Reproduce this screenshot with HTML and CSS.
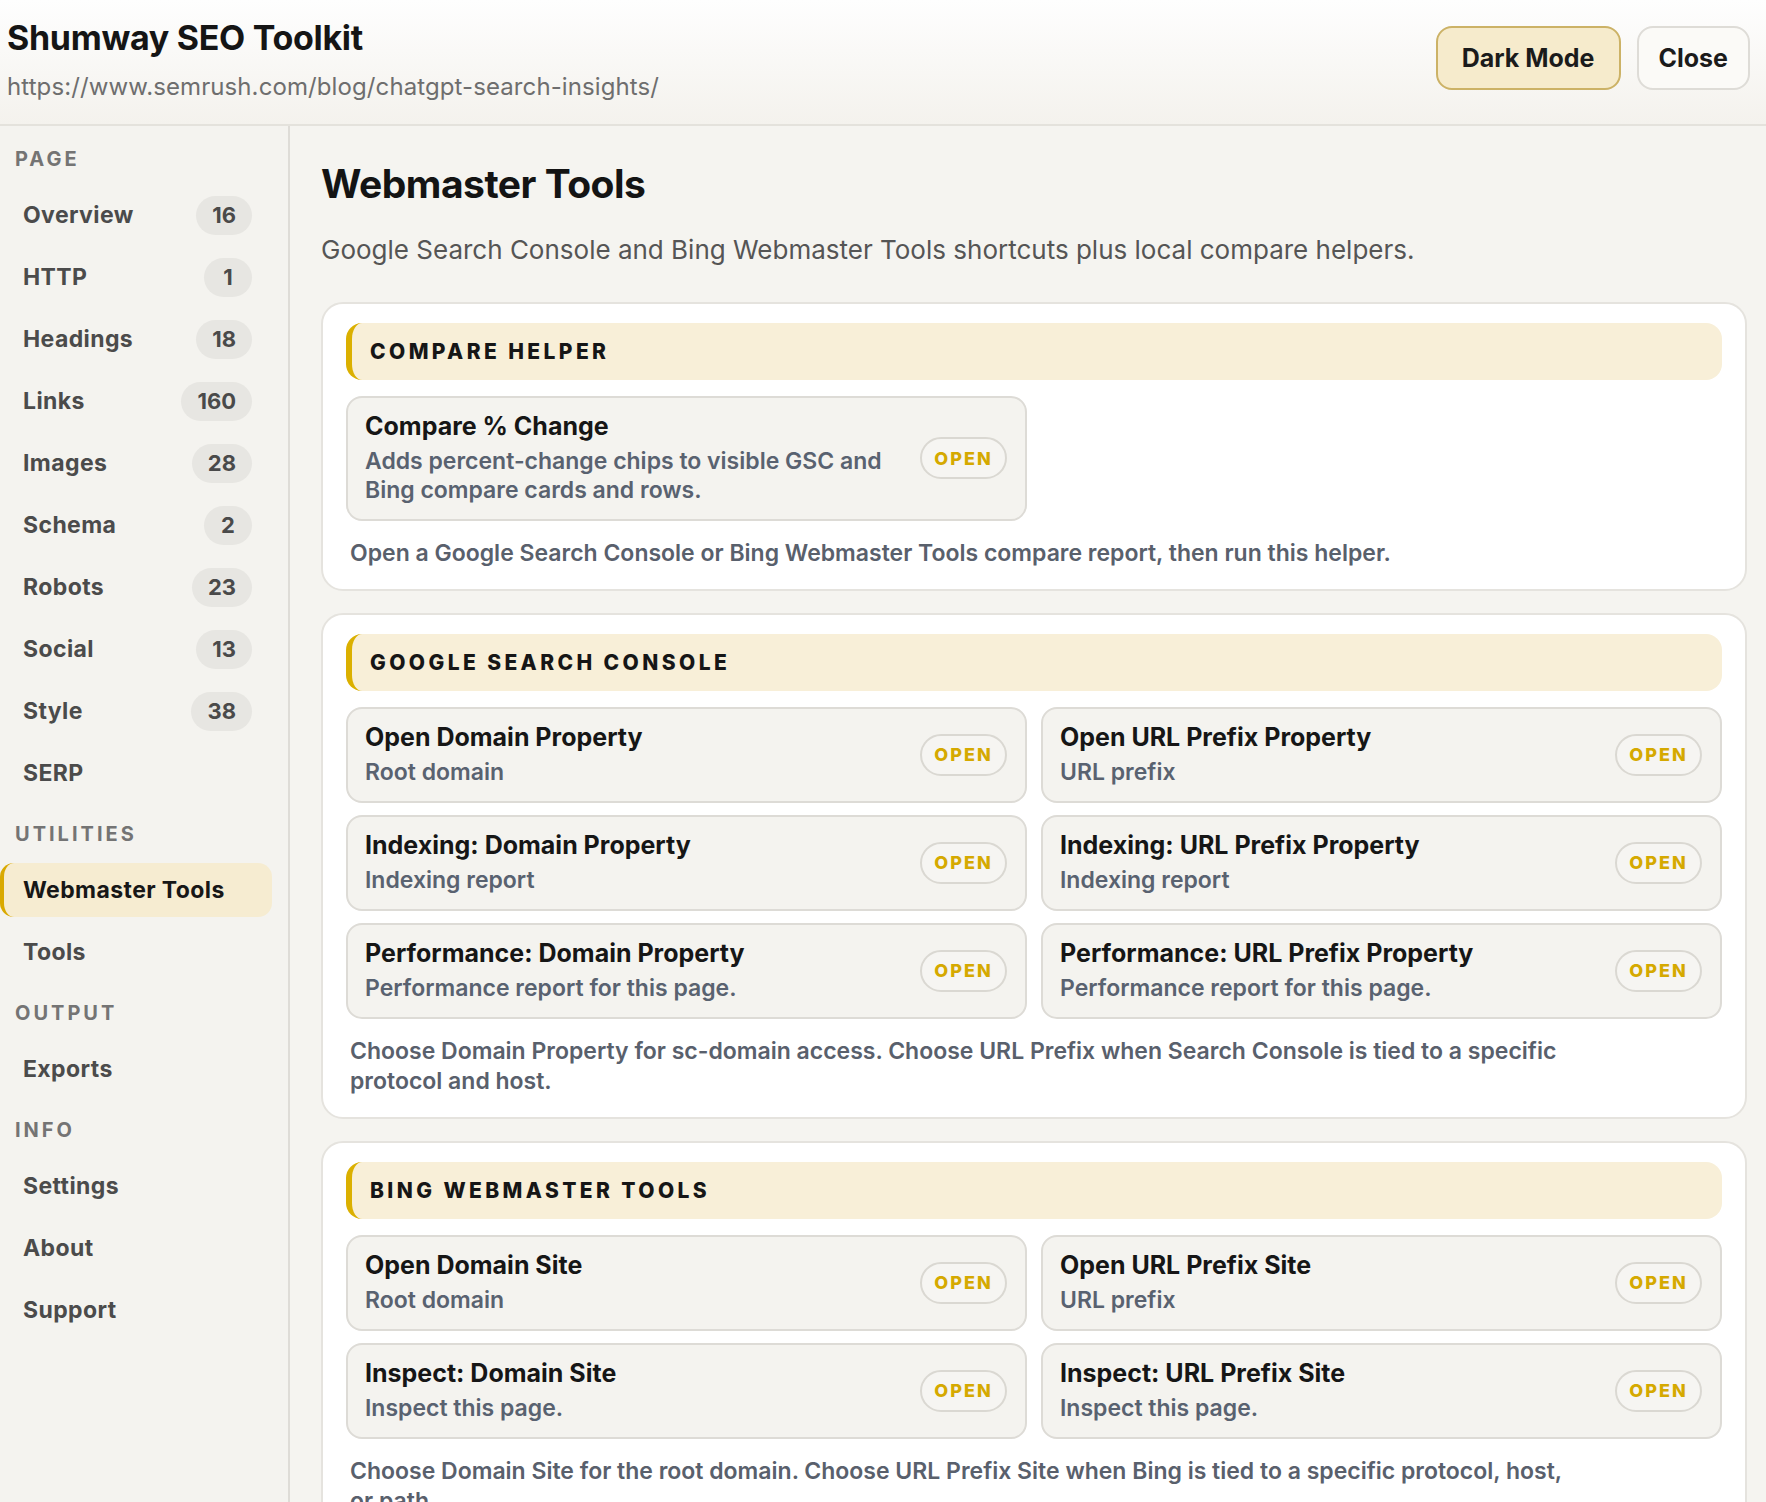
FILE: index.html
```html
<!DOCTYPE html>
<html lang="en">
<head>
    <meta charset="UTF-8">
    <meta name="viewport" content="width=device-width, initial-scale=1.0">
    <title>Shumway SEO Toolkit - Webmaster Tools</title>
    <link rel="stylesheet" href="styles.css">
</head>
<body>
    <header class="topbar">
        <div class="brand">
            <h1 class="brand-title">Shumway SEO Toolkit</h1>
            <div class="brand-url">https://www.semrush.com/blog/chatgpt-search-insights/</div>
        </div>
        <div class="topbar-actions">
            <button class="btn btn-accent" type="button">Dark Mode</button>
            <button class="btn" type="button">Close</button>
        </div>
    </header>

    <div class="layout">
        <nav class="sidebar">
            <div class="nav-label">Page</div>
            <a class="nav-item" href="#">Overview <span class="badge">16</span></a>
            <a class="nav-item" href="#">HTTP <span class="badge">1</span></a>
            <a class="nav-item" href="#">Headings <span class="badge">18</span></a>
            <a class="nav-item" href="#">Links <span class="badge">160</span></a>
            <a class="nav-item" href="#">Images <span class="badge">28</span></a>
            <a class="nav-item" href="#">Schema <span class="badge">2</span></a>
            <a class="nav-item" href="#">Robots <span class="badge">23</span></a>
            <a class="nav-item" href="#">Social <span class="badge">13</span></a>
            <a class="nav-item" href="#">Style <span class="badge">38</span></a>
            <a class="nav-item" href="#">SERP</a>

            <div class="nav-label">Utilities</div>
            <a class="nav-item active" href="#">Webmaster Tools</a>
            <a class="nav-item" href="#">Tools</a>

            <div class="nav-label">Output</div>
            <a class="nav-item" href="#">Exports</a>

            <div class="nav-label">Info</div>
            <a class="nav-item" href="#">Settings</a>
            <a class="nav-item" href="#">About</a>
            <a class="nav-item" href="#">Support</a>
        </nav>

        <main class="content">
            <h2 class="page-title">Webmaster Tools</h2>
            <p class="page-intro">Google Search Console and Bing Webmaster Tools shortcuts plus local compare helpers.</p>

            <section class="card">
                <div class="card-head">Compare Helper</div>
                <div class="tool-grid">
                    <div class="tool">
                        <div class="tool-text">
                            <div class="tool-name">Compare % Change</div>
                            <div class="tool-desc">Adds percent-change chips to visible GSC and<br>Bing compare cards and rows.</div>
                        </div>
                        <button class="open-pill" type="button">Open</button>
                    </div>
                </div>
                <p class="card-note">Open a Google Search Console or Bing Webmaster Tools compare report, then run this helper.</p>
            </section>

            <section class="card">
                <div class="card-head">Google Search Console</div>
                <div class="tool-grid">
                    <div class="tool">
                        <div class="tool-text">
                            <div class="tool-name">Open Domain Property</div>
                            <div class="tool-desc">Root domain</div>
                        </div>
                        <button class="open-pill" type="button">Open</button>
                    </div>
                    <div class="tool">
                        <div class="tool-text">
                            <div class="tool-name">Open URL Prefix Property</div>
                            <div class="tool-desc">URL prefix</div>
                        </div>
                        <button class="open-pill" type="button">Open</button>
                    </div>
                    <div class="tool">
                        <div class="tool-text">
                            <div class="tool-name">Indexing: Domain Property</div>
                            <div class="tool-desc">Indexing report</div>
                        </div>
                        <button class="open-pill" type="button">Open</button>
                    </div>
                    <div class="tool">
                        <div class="tool-text">
                            <div class="tool-name">Indexing: URL Prefix Property</div>
                            <div class="tool-desc">Indexing report</div>
                        </div>
                        <button class="open-pill" type="button">Open</button>
                    </div>
                    <div class="tool">
                        <div class="tool-text">
                            <div class="tool-name">Performance: Domain Property</div>
                            <div class="tool-desc">Performance report for this page.</div>
                        </div>
                        <button class="open-pill" type="button">Open</button>
                    </div>
                    <div class="tool">
                        <div class="tool-text">
                            <div class="tool-name">Performance: URL Prefix Property</div>
                            <div class="tool-desc">Performance report for this page.</div>
                        </div>
                        <button class="open-pill" type="button">Open</button>
                    </div>
                </div>
                <p class="card-note">Choose Domain Property for sc-domain access. Choose URL Prefix when Search Console is tied to a specific<br>protocol and host.</p>
            </section>

            <section class="card">
                <div class="card-head">Bing Webmaster Tools</div>
                <div class="tool-grid">
                    <div class="tool">
                        <div class="tool-text">
                            <div class="tool-name">Open Domain Site</div>
                            <div class="tool-desc">Root domain</div>
                        </div>
                        <button class="open-pill" type="button">Open</button>
                    </div>
                    <div class="tool">
                        <div class="tool-text">
                            <div class="tool-name">Open URL Prefix Site</div>
                            <div class="tool-desc">URL prefix</div>
                        </div>
                        <button class="open-pill" type="button">Open</button>
                    </div>
                    <div class="tool">
                        <div class="tool-text">
                            <div class="tool-name">Inspect: Domain Site</div>
                            <div class="tool-desc">Inspect this page.</div>
                        </div>
                        <button class="open-pill" type="button">Open</button>
                    </div>
                    <div class="tool">
                        <div class="tool-text">
                            <div class="tool-name">Inspect: URL Prefix Site</div>
                            <div class="tool-desc">Inspect this page.</div>
                        </div>
                        <button class="open-pill" type="button">Open</button>
                    </div>
                </div>
                <p class="card-note">Choose Domain Site for the root domain. Choose URL Prefix Site when Bing is tied to a specific protocol, host,<br>or path.</p>
            </section>
        </main>
    </div>
</body>
</html>
```

FILE: styles.css
```css
* {
    box-sizing: border-box;
}
body {
    margin: 0;
    font-family: 'Inter', 'Noto Sans', sans-serif;
    background-color: #f5f4f0;
    color: #161616;
}

/* top bar */
.topbar {
    display: flex;
    justify-content: space-between;
    align-items: flex-start;
    height: 126px;
    padding: 18px 16px 0 7px;
    background: linear-gradient(#fefefe, #f4f2ed);
    border-bottom: 2px solid #e4e2dc;
}
.brand-title {
    margin: 0;
    font-size: 34px;
    line-height: 40px;
    font-weight: 700;
    letter-spacing: -0.3px;
    color: #151515;
}
.brand-url {
    margin-top: 14px;
    font-size: 24px;
    line-height: 30px;
    letter-spacing: 0.1px;
    color: #6e6e6e;
}
.topbar-actions {
    display: flex;
    gap: 16px;
    padding-top: 8px;
}
.btn {
    height: 64px;
    padding: 0 20px;
    font-family: inherit;
    font-size: 25px;
    font-weight: 700;
    color: #1b1b1b;
    background-color: #fbfaf7;
    border: 2px solid #dedcd7;
    border-radius: 16px;
    cursor: pointer;
}
.btn-accent {
    padding: 0 24px;
    background-color: #f6ebcc;
    border-color: #ccb266;
}

/* layout */
.layout {
    display: flex;
    min-height: calc(100vh - 126px);
}
.sidebar {
    flex: 0 0 290px;
    display: flex;
    flex-direction: column;
    padding: 21px 16px 0 0;
    background-color: #f4f3ef;
    border-right: 2px solid #dedcd7;
}
.nav-label {
    margin: 14px 0 17px;
    padding-left: 15px;
    font-size: 20px;
    line-height: 24px;
    font-weight: 700;
    letter-spacing: 3px;
    text-transform: uppercase;
    color: #747474;
}
.nav-label:first-child {
    margin-top: 0;
}
.nav-item {
    display: flex;
    align-items: center;
    justify-content: space-between;
    height: 54px;
    margin-bottom: 8px;
    padding: 0 20px 0 19px;
    border-left: 4px solid transparent;
    border-radius: 14px;
    font-size: 23px;
    font-weight: 700;
    letter-spacing: 0.4px;
    color: #4b4b4b;
    text-decoration: none;
}
.nav-item.active {
    background-color: #f6ecd1;
    border-left-color: #d9a900;
    color: #171717;
}
.badge {
    min-width: 48px;
    height: 39px;
    padding: 0 16px;
    border-radius: 20px;
    background-color: #e7e6e2;
    font-size: 22px;
    line-height: 39px;
    text-align: center;
    letter-spacing: 0;
    color: #4a4a4a;
}

/* main content */
.content {
    flex: 1;
    padding: 35px 19px 40px 31px;
}
.page-title {
    margin: 0;
    font-size: 39px;
    line-height: 46px;
    font-weight: 700;
    letter-spacing: -0.5px;
    color: #141414;
}
.page-intro {
    margin: 27px 0 36px;
    font-size: 26px;
    line-height: 32px;
    color: #555555;
}
.card {
    margin-bottom: 22px;
    padding: 19px 23px 21px;
    background-color: #ffffff;
    border: 2px solid #e5e3de;
    border-radius: 22px;
}
.card-head {
    display: flex;
    align-items: center;
    height: 57px;
    padding-left: 18px;
    background-color: #f8efd8;
    border-left: 6px solid #dbb000;
    border-radius: 16px;
    font-size: 21px;
    font-weight: 800;
    letter-spacing: 3.4px;
    text-transform: uppercase;
    color: #161616;
}
.tool-grid {
    display: grid;
    grid-template-columns: 1fr 1fr;
    gap: 12px 14px;
    margin-top: 16px;
}
.tool {
    display: flex;
    align-items: center;
    justify-content: space-between;
    padding: 13px 18px 14px 17px;
    background-color: #f4f3ef;
    border: 2px solid #dddbd6;
    border-radius: 16px;
}
.tool-name {
    font-size: 25px;
    line-height: 30px;
    font-weight: 700;
    color: #161616;
}
.tool-desc {
    margin-top: 6px;
    font-size: 23px;
    line-height: 29px;
    font-weight: 600;
    color: #596270;
}
.open-pill {
    flex-shrink: 0;
    width: 87px;
    height: 42px;
    margin-left: 20px;
    padding: 0;
    font-family: inherit;
    font-size: 18px;
    font-weight: 800;
    letter-spacing: 2px;
    text-transform: uppercase;
    color: #d5a900;
    background-color: #f6f5f2;
    border: 2px solid #dad8d2;
    border-radius: 21px;
    cursor: pointer;
}
.card-note {
    margin: 17px 0 0;
    padding-left: 4px;
    font-size: 23px;
    line-height: 30px;
    font-weight: 600;
    color: #59606c;
}
```
